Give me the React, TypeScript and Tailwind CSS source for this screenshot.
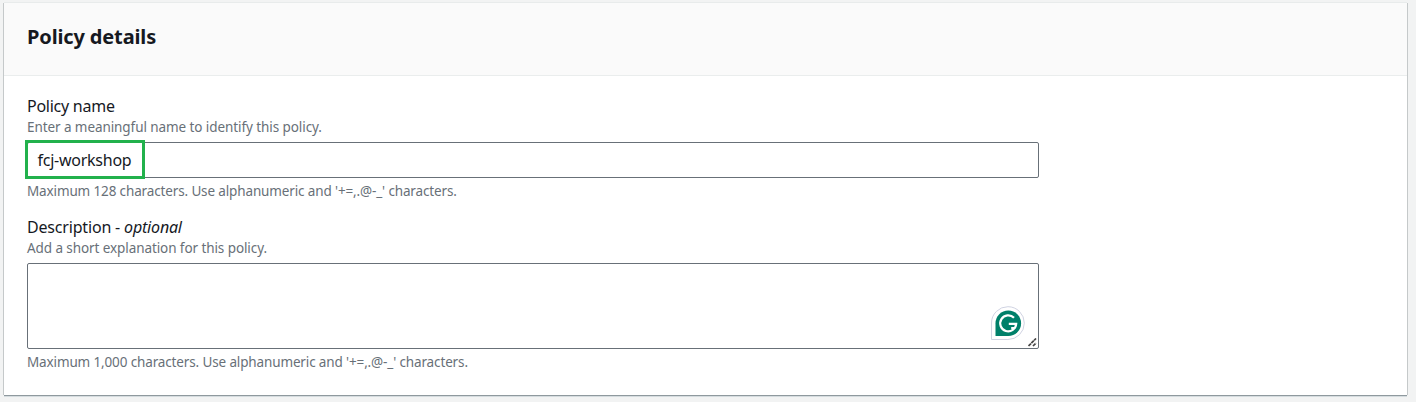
import React from "react";

function Grammarly() {
  return (
    <svg width="36" height="36" viewBox="0 0 36 36" fill="none">
      <path d="M1.5 33.5V17a16.4 16.4 0 1 1 16.4 16.5Z" fill="#fff" stroke="#d0d3e2" />
      <path d="M5.5 30V17.2a12.8 12.8 0 1 1 12.8 12.8Z" fill="#00806a" />
      <path d="M24 11.8a8 8 0 1 0 2.2 6h-7.4M21.2 22h4.4" stroke="#fff" strokeWidth="2.2" />
    </svg>
  );
}

function ResizeGrip() {
  return (
    <svg width="9" height="9" viewBox="0 0 9 9" fill="none">
      <path d="M.5 8 8 .5M5 8l3-3" stroke="#444" strokeWidth="1.7" strokeDasharray="3.5 .5" />
    </svg>
  );
}

export default function App() {
  return (
    <div className="h-[402px] w-[1416px] overflow-hidden bg-[#f2f3f3] pl-1 pt-[3px] font-['Noto_Sans',sans-serif] text-[#16191f]">
      <section className="h-[392px] w-[1403px] bg-white shadow-[0_1px_0_0_#8f999e,0_2px_0_0_#d5dcdf,1px_0_0_0_#c5c9ca,-1px_0_0_0_#c5c9ca,0_-1px_0_0_#e8ebeb]">
        <header className="h-[73px] border-b border-[#eaeded] bg-[#fafafa] px-[23px] pt-5">
          <h2 className="text-[20px] font-bold leading-[28px] tracking-[-0.14px]">Policy details</h2>
        </header>
        <main className="px-[23px] pt-[19px]">
          <label className="block text-[16px] leading-[22px] tracking-[-0.25px]">Policy name</label>
          <p className="text-[13.5px] leading-5 tracking-[-0.08px] text-[#687078]">Enter a meaningful name to identify this policy.</p>
          <div className="relative mt-[5px] h-9 w-[1012px] rounded-[2px] border border-[#687078] pl-[9.5px] text-[16px] leading-[34px] tracking-[-0.25px]">
            fcj-workshop
            <div className="absolute -left-[3px] -top-[3px] h-[39px] w-[120px] border-[3px] border-[#22b14c]" />
          </div>
          <p className="mt-[3px] text-[13.5px] leading-5 tracking-[-0.135px] text-[#687078]">Maximum 128 characters. Use alphanumeric and '+=,.@-_' characters.</p>
          <label className="mt-[15px] block text-[16px] leading-[22px] tracking-[-0.18px]">Description - <i>optional</i></label>
          <p className="text-[13.5px] leading-5 tracking-[-0.085px] text-[#687078]">Add a short explanation for this policy.</p>
          <div className="relative mt-[5px] h-[86px] w-[1012px] rounded-[2px] border border-[#687078]">
            <div className="absolute right-3 top-[42px]"><Grammarly /></div>
            <div className="absolute bottom-px right-px"><ResizeGrip /></div>
          </div>
          <p className="mt-[3px] text-[13.5px] leading-5 tracking-[-0.135px] text-[#687078]">Maximum 1,000 characters. Use alphanumeric and '+=,.@-_' characters.</p>
        </main>
      </section>
    </div>
  );
}
